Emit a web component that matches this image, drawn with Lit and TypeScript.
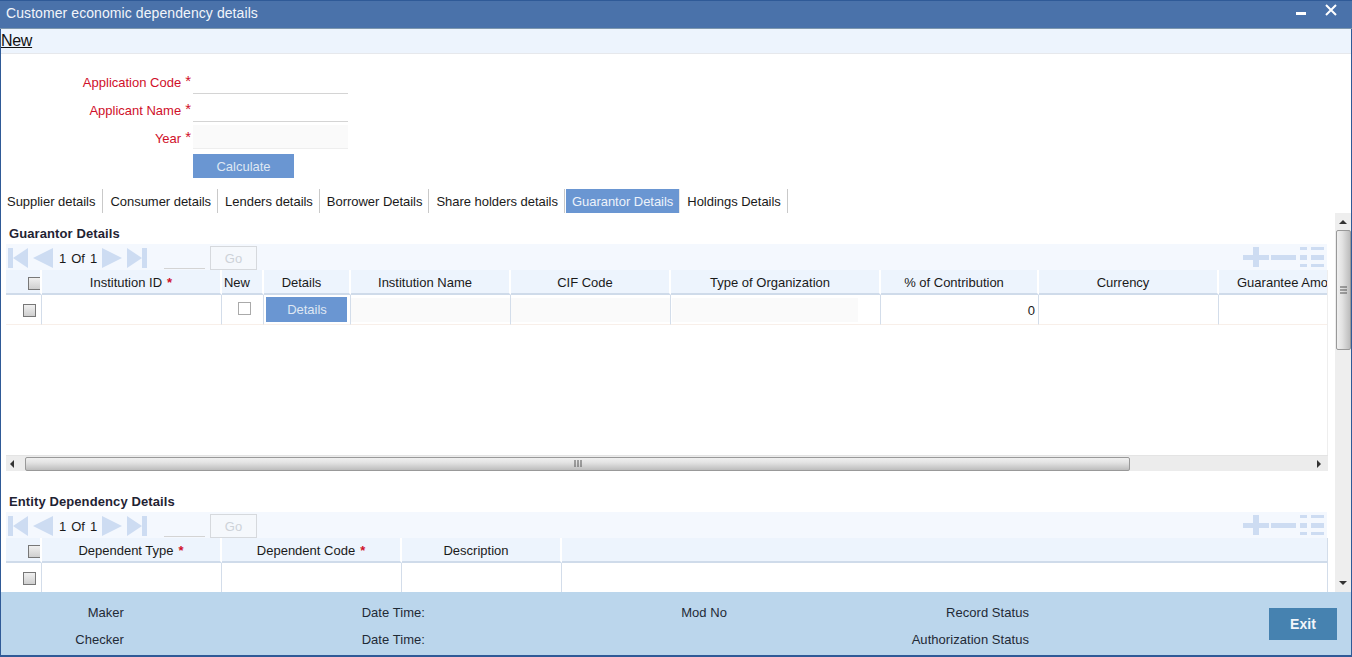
import { LitElement, html, css, svg } from "lit";
import { customElement } from "lit/decorators.js";

const tabs = ["Supplier details","Consumer details","Lenders details","Borrower Details","Share holders details","Guarantor Details","Holdings Details"];
const cols1 = [36,180,42,87,160,160,210,158,180,200];
const cols2 = [36,180,180,160,766];

const pagerIcons = svg`
  <svg class="nav" width="20" height="20" viewBox="0 0 20 20"><path d="M0 0h5v20H0zM5 10 20 0v20z" fill="#cddcf2"/></svg>
  <svg class="nav" width="20" height="20" viewBox="0 0 20 20"><path d="M0 10 20 0v20z" fill="#cddcf2"/></svg>`;
const pagerIcons2 = svg`
  <svg class="nav" width="20" height="20" viewBox="0 0 20 20"><path d="M0 0l20 10L0 20z" fill="#cddcf2"/></svg>
  <svg class="nav" width="20" height="20" viewBox="0 0 20 20"><path d="M0 0l15 10L0 20zM15 0h5v20h-5z" fill="#cddcf2"/></svg>`;
const editIcons = svg`
  <svg width="82" height="20" viewBox="0 0 82 20"><path d="M0 8h10V0h6v8h10v5H16v7h-6v-7H0zM28 8h25v5H28zM57 0h7v3h-7zM57 8h7v5h-7zM57 17h7v3h-7zM68 0h13v3H68zM68 8h13v5H68zM68 17h13v3H68z" fill="#cddcf2"/></svg>`;

@customElement("app-root")
export class AppRoot extends LitElement {
  static styles = css`
    :host { display: block; width: 1352px; height: 657px; overflow: hidden; background: #fff; font-family: "Liberation Sans", Arial, sans-serif; font-size: 13px; color: #1a1a1a; }
    .win { width: 1352px; height: 657px; box-sizing: border-box; display: flex; flex-direction: column; border-left: 1px solid #2f5a97; border-right: 1px solid #2f5a97; border-bottom: 2px solid #2f5a97; }
    .title { height: 29px; flex: none; box-sizing: border-box; margin: 0 -1px; padding: 0 14px 3px 6px; background: #4a72aa; border-top: 1px solid #2f5a97; border-bottom: 1px solid #7d97ae; color: #f2f5fa; font-size: 14px; letter-spacing: 0.08px; display: flex; align-items: center; justify-content: space-between; }
    .winbtns { display: flex; align-items: flex-start; gap: 19px; height: 16px; align-self: flex-start; margin-top: 3px; }
    .toolbar { height: 25px; flex: none; box-sizing: border-box; background: #edf4fd; border-bottom: 1px solid #e6e8ec; display: flex; align-items: center; }
    .toolbar a { font-size: 16px; letter-spacing: -0.3px; line-height: 22px; text-decoration: underline; color: #111; }
    .form { flex: none; display: grid; grid-template-columns: 192px 155px; grid-auto-rows: 28px; padding-top: 14px; }
    .lbl { color: #d0102a; text-align: right; font-size: 13px; padding-right: 2px; display: flex; justify-content: flex-end; align-items: center; height: 28px; }
    .lbl b { font-weight: normal; font-size: 15px; margin-left: 4px; transform: translateY(-2px); }
    .inp { height: 26px; box-sizing: border-box; border-bottom: 1px solid #d4d4d4; }
    .inp.ro { background: #fafafa; border-bottom-color: #eee; margin-top: 1px; height: 24px; }
    .calcrow { grid-column: 2; }
    .btn { background: #6a96d2; color: #dfe7f3; display: flex; align-items: center; justify-content: center; font-size: 13px; }
    .calc { width: 101px; height: 24px; margin-top: 2px; }
    .tabs { flex: none; height: 24px; margin-top: 9px; display: flex; }
    .tab { font-size: 13px; letter-spacing: -0.03px; height: 24px; display: flex; align-items: center; padding: 0 6px 0 7px; border-right: 1px solid #c9c9c9; color: #1a1a1a; }
    .tab:first-child { padding: 0 7px 0 6px; }
    .tab.on { background: #6a96d2; color: #edf2fa; margin-left: 1px; padding: 0 6px; border-right-color: #e8e8e8; }
    .main { flex: 1; min-height: 0; display: flex; }
    .content { width: 1334px; flex: none; padding-left: 5px; box-sizing: border-box; overflow: hidden; padding-top: 11px; }
    h3 { margin: 0; height: 20px; padding-left: 3px; font-size: 13px; letter-spacing: 0.1px; font-weight: bold; color: #1f2333; line-height: 19px; }
    .pager { height: 26px; width: 1321px; box-sizing: border-box; background: #f4f8fe; display: flex; align-items: center; padding: 0 2px; }
    .nav { flex: none; margin-right: 5px; margin-top: 2px; }
    .of { font-size: 13px; width: 43px; margin-left: 1px; margin-top: 2px; display: flex; gap: 5px; justify-content: flex-start; color: #1a1a1a; }
    .nxt { display: flex; }
    .goinp { width: 41px; height: 25px; box-sizing: border-box; border-bottom: 1px solid #d4d4d4; margin-left: 12px; margin-right: 5px; align-self: flex-start; }
    .go { width: 47px; height: 24px; align-self: flex-end; box-sizing: border-box; border: 1px solid #d6d9dd; color: #cdd2d8; background: #f5f8fc; display: flex; align-items: center; justify-content: center; font-size: 13px; }
    .edit { margin-left: auto; display: flex; }
    .gridwrap { width: 1322px; overflow: hidden; }
    .g1 { height: 185px; border-right: 1px solid #eee; box-sizing: border-box; }
    .g2 { height: 54px; }
    .row { display: flex; width: max-content; }
    .hc { height: 25px; box-sizing: border-box; padding-top: 1px; background: #edf4fd; border-bottom: 2px solid #cfdbea; border-right: 2px solid #fff; font-size: 13px; display: flex; align-items: center; justify-content: center; white-space: nowrap; overflow: hidden; color: #1a1a1a; flex: none; }
    .hc i { font-style: normal; color: #d0102a; margin-left: 5px; font-weight: bold; }
    .hc.off { padding-right: 10px; }
    .hc.left { justify-content: flex-start; padding-left: 18px; }
    .c { height: 30px; box-sizing: border-box; border-right: 1px solid #d3ddea; border-bottom: 1px solid #f8efe9; flex: none; display: flex; align-items: center; justify-content: center; }
    .g2 .c { height: 29px; border-bottom: none; }
    .c.num { justify-content: flex-end; padding: 1px 3px 0 0; font-size: 13px; }
    .fill { width: 100%; height: 24px; background: #fafafa; }
    .fill.org { width: 186px; margin-right: 22px; }
    .ck { width: 13px; height: 13px; box-sizing: border-box; border: 1px solid #777; background: linear-gradient(#f0f0f0,#cfcfcf); flex: none; margin-left: 12px; margin-top: 1px; }
    .ck.w { background: #fff; border-color: #aaa; margin-top: -2px; margin-left: 4px; }
    .hck { margin-left: 22px; margin-top: 3px; }
    .det { width: 81px; height: 25px; box-sizing: border-box; padding: 1px 0 0 2px; margin-top: -1px; margin-right: 2px; }
    .hbar { width: 1322px; height: 16px; background: #ececec; border-top: 1px solid #e4e4e4; box-sizing: border-box; display: flex; align-items: center; }
    .thumb { background: linear-gradient(#f0f0f0,#e2e2e2 40%,#bdbdbd); border: 1px solid #999; border-radius: 2px; box-sizing: border-box; display: flex; align-items: center; justify-content: center; color: #555; }
    .hthumb { width: 1105px; height: 14px; margin-left: 8px; }
    .arr { flex: none; width: 11px; display: flex; justify-content: center; }
    .arr.r { margin-right: 4px; }
    .hgap { flex: 1; }
    .sec2 { margin-top: 21px; }
    .g2 .hc.last { border-right: 1px solid #d3ddea; }
    .vbar { width: 16px; flex: none; background: #eee; display: flex; flex-direction: column; align-items: center; box-sizing: border-box; }
    .vthumb { width: 15px; height: 120px; background: linear-gradient(90deg,#f0f0f0,#e2e2e2 40%,#bdbdbd); }
    .varr { height: 17px; display: flex; align-items: center; justify-content: center; flex: none; }
    .vgap { flex: 1; }
    .footer { flex: none; height: 63px; background: #bbd6ec; display: grid; grid-template-columns: 123px 301px 302px 302px 1fr; grid-template-rows: 27px 27px; padding-top: 7px; box-sizing: border-box; font-size: 13px; letter-spacing: 0.05px; color: #1f2a36; }
    .footer span { text-align: right; align-self: center; }
    .exit { grid-column: 5; grid-row: 1 / span 2; justify-self: end; margin-right: 14px; margin-top: 9px; width: 68px; height: 32px; background: #4682b0; color: #f2f6fa; font-weight: bold; font-size: 14px; display: flex; align-items: center; justify-content: center; }
  `;

  private pager() {
    return html`<div class="pager">
      ${pagerIcons}<span class="of"><span>1</span><span>Of</span><span>1</span></span>
      <span class="nxt">${pagerIcons2}</span>
      <div class="goinp"></div><div class="go">Go</div>
      <div class="edit">${editIcons}</div>
    </div>`;
  }

  render() {
    const cell = (w: number, body: unknown = "", cls = "c") => html`<div class=${cls} style="width:${w}px">${body}</div>`;
    const hd = (w: number, body: unknown = "", cls = "hc") => html`<div class=${cls} style="width:${w}px">${body}</div>`;
    const star = html`<i>*</i>`;
    return html`<div class="win">
      <div class="title"><span>Customer economic dependency details</span>
        <div class="winbtns">
          <svg width="10" height="16" viewBox="0 0 10 16"><rect x="0" y="8" width="10" height="3" fill="#fff"/></svg>
          <svg width="13" height="16" viewBox="0 0 13 16"><path d="M1 1l10 10M11 1 1 11" stroke="#fff" stroke-width="2" fill="none"/></svg>
        </div>
      </div>
      <div class="toolbar"><a>New</a></div>
      <div class="form">
        <div class="lbl">Application Code<b>*</b></div><div class="inp"></div>
        <div class="lbl">Applicant Name<b>*</b></div><div class="inp"></div>
        <div class="lbl">Year<b>*</b></div><div class="inp ro"></div>
        <div class="calcrow"><div class="btn calc">Calculate</div></div>
      </div>
      <div class="tabs">${tabs.map(t => html`<div class="tab ${t === "Guarantor Details" ? "on" : ""}">${t}</div>`)}</div>
      <div class="main">
        <div class="content">
          <h3>Guarantor Details</h3>
          ${this.pager()}
          <div class="gridwrap g1">
            <div class="row">
              ${hd(cols1[0], html`<div class="ck hck"></div>`)}
              ${hd(cols1[1], html`Institution ID${star}`)}
              ${hd(cols1[2], "New", "hc off")}
              ${hd(cols1[3], "Details", "hc off")}
              ${hd(cols1[4], "Institution Name", "hc off")}
              ${hd(cols1[5], "CIF Code", "hc off")}
              ${hd(cols1[6], "Type of Organization", "hc off")}
              ${hd(cols1[7], "% of Contribution", "hc off")}
              ${hd(cols1[8], "Currency", "hc off")}
              ${hd(cols1[9], "Guarantee Amount", "hc left")}
            </div>
            <div class="row">
              ${cell(cols1[0], html`<div class="ck"></div>`)}
              ${cell(cols1[1])}
              ${cell(cols1[2], html`<div class="ck w"></div>`)}
              ${cell(cols1[3], html`<div class="btn det">Details</div>`)}
              ${cell(cols1[4], html`<div class="fill"></div>`)}
              ${cell(cols1[5], html`<div class="fill"></div>`)}
              ${cell(cols1[6], html`<div class="fill org"></div>`)}
              ${cell(cols1[7], "0", "c num")}
              ${cell(cols1[8])}
              ${cell(cols1[9])}
            </div>
          </div>
          <div class="hbar">
            <div class="arr"><svg width="6" height="8"><path d="M5 0v8L1 4z" fill="#333"/></svg></div>
            <div class="thumb hthumb"><svg width="8" height="7"><path d="M1 0v7M4 0v7M7 0v7" stroke="#555"/></svg></div>
            <div class="hgap"></div>
            <div class="arr r"><svg width="6" height="8"><path d="M1 0v8l4-4z" fill="#333"/></svg></div>
          </div>
          <div class="sec2">
            <h3>Entity Dependency Details</h3>
            ${this.pager()}
            <div class="gridwrap g2">
              <div class="row">
                ${hd(cols2[0], html`<div class="ck hck"></div>`)}
                ${hd(cols2[1], html`Dependent Type${star}`)}
                ${hd(cols2[2], html`Dependent Code${star}`)}
                ${hd(cols2[3], "Description", "hc off")}
                ${hd(cols2[4], "", "hc last")}
              </div>
              <div class="row">
                ${cell(cols2[0], html`<div class="ck"></div>`)}
                ${cell(cols2[1])}
                ${cell(cols2[2])}
                ${cell(cols2[3])}
                ${cell(cols2[4])}
              </div>
            </div>
          </div>
        </div>
        <div class="vbar">
          <div class="varr"><svg width="8" height="5"><path d="M0 5h8L4 1z" fill="#333"/></svg></div>
          <div class="thumb vthumb"><svg width="7" height="8"><path d="M0 1h7M0 4h7M0 7h7" stroke="#555"/></svg></div>
          <div class="vgap"></div>
          <div class="varr"><svg width="8" height="5"><path d="M0 0h8L4 4z" fill="#333"/></svg></div>
        </div>
      </div>
      <div class="footer">
        <span>Maker</span><span>Date Time:</span><span>Mod No</span><span>Record Status</span>
        <div class="exit">Exit</div>
        <span>Checker</span><span>Date Time:</span><span></span><span>Authorization Status</span>
      </div>
    </div>`;
  }
}
